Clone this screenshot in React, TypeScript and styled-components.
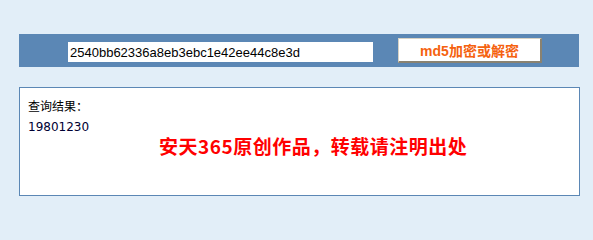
import styled, { createGlobalStyle } from 'styled-components';

const GlobalStyle = createGlobalStyle`
  html, body {
    margin: 0;
    padding: 0;
    background: #e2eef8;
  }
  body {
    font-family: "Liberation Sans", "Noto Sans CJK SC", sans-serif;
  }
`;

const Page = styled.div`
  width: 593px;
  height: 224px;
  padding: 34px 0 0 19px;
  box-sizing: border-box;
  display: flex;
  flex-direction: column;
  gap: 20px;
`;

const Toolbar = styled.form`
  width: 560px;
  height: 33px;
  margin: 0;
  background: #5b87b5;
  display: flex;
  align-items: flex-start;
  box-sizing: border-box;
  padding-left: 49px;
`;

const HashInput = styled.input`
  margin-top: 8px;
  width: 305px;
  height: 20px;
  box-sizing: border-box;
  border: none;
  outline: none;
  padding: 0 2px;
  background: #fff;
  color: #000;
  font-family: "Liberation Sans", Arial, sans-serif;
  font-size: 13px;
`;

const SubmitButton = styled.button`
  margin: 4px 0 0 25px;
  width: 144px;
  height: 25px;
  box-sizing: border-box;
  background: #fff;
  border: 1px solid #d8d2c4;
  border-right: 2px solid #8a8270;
  border-bottom: 2px solid #8a8270;
  color: #f5620f;
  font-family: "Liberation Sans", "Noto Sans CJK SC", sans-serif;
  font-weight: bold;
  font-size: 14px;
  padding: 0;
  cursor: pointer;
`;

const ResultPanel = styled.div`
  width: 561px;
  height: 109px;
  box-sizing: border-box;
  background: #fff;
  border: 1px solid #5b87b5;
  padding: 10px 8px;
  display: flex;
  flex-direction: column;
`;

const Label = styled.div`
  font-family: "Noto Sans CJK SC", sans-serif;
  font-size: 12px;
  line-height: 16px;
  color: #000;
`;

const Value = styled.div`
  margin-top: 6px;
  font-family: "DejaVu Sans", Verdana, sans-serif;
  font-size: 12px;
  line-height: 14px;
  color: #000033;
`;

const Notice = styled.div`
  margin: 0 0 0 131px;
  font-family: "Noto Sans CJK SC", serif;
  font-weight: bold;
  font-size: 19px;
  line-height: 24px;
  color: #ff0000;
  letter-spacing: 0.5px;
`;

export default function App() {
  return (
    <>
      <GlobalStyle />
      <Page>
        <Toolbar onSubmit={(e) => e.preventDefault()}>
          <HashInput defaultValue="2540bb62336a8eb3ebc1e42ee44c8e3d" />
          <SubmitButton type="submit">md5加密或解密</SubmitButton>
        </Toolbar>
        <ResultPanel>
          <Label>查询结果：</Label>
          <Value>19801230</Value>
          <Notice>安天365原创作品，转载请注明出处</Notice>
        </ResultPanel>
      </Page>
    </>
  );
}
